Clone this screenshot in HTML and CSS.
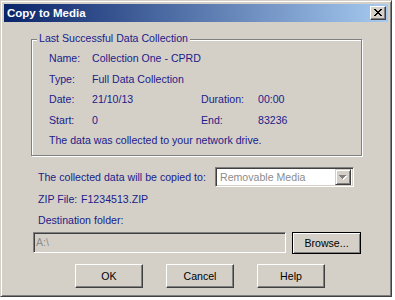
FILE: index.html
```html
<!DOCTYPE html>
<html>
<head>
<meta charset="utf-8">
<link rel="stylesheet" href="styles.css">
</head>
<body>
<div class="window">
  <div class="titlebar">
    <span class="title">Copy to Media</span>
    <div class="close">
      <svg width="8" height="7" viewBox="0 0 8 7" shape-rendering="crispEdges">
        <rect x="0" y="0" width="2" height="1"/><rect x="6" y="0" width="2" height="1"/>
        <rect x="1" y="1" width="2" height="1"/><rect x="5" y="1" width="2" height="1"/>
        <rect x="2" y="2" width="4" height="1"/>
        <rect x="3" y="3" width="2" height="1"/>
        <rect x="2" y="4" width="4" height="1"/>
        <rect x="1" y="5" width="2" height="1"/><rect x="5" y="5" width="2" height="1"/>
        <rect x="0" y="6" width="2" height="1"/><rect x="6" y="6" width="2" height="1"/>
      </svg>
    </div>
  </div>
  <div class="content">
    <div class="group">
      <div class="legend">Last Successful Data Collection</div>
      <div class="grid">
        <span>Name:</span><span class="span3">Collection One - CPRD</span>
        <span>Type:</span><span class="span3">Full Data Collection</span>
        <span>Date:</span><span>21/10/13</span><span>Duration:</span><span>00:00</span>
        <span>Start:</span><span>0</span><span>End:</span><span>83236</span>
        <span class="span4">The data was collected to your network drive.</span>
      </div>
    </div>
    <div class="copy-row">
      <span class="copy-label">The collected data will be copied to:</span>
      <div class="combo">
        <span class="combo-text">Removable Media</span>
        <div class="combo-btn">
          <svg width="8" height="5" viewBox="0 0 8 5" shape-rendering="crispEdges">
            <g fill="#ffffff"><rect x="1" y="1" width="7" height="1"/><rect x="2" y="2" width="5" height="1"/><rect x="3" y="3" width="3" height="1"/><rect x="4" y="4" width="1" height="1"/></g>
            <g fill="#808080"><rect x="0" y="0" width="7" height="1"/><rect x="1" y="1" width="5" height="1"/><rect x="2" y="2" width="3" height="1"/><rect x="3" y="3" width="1" height="1"/></g>
          </svg>
        </div>
      </div>
    </div>
    <div class="zip-row"><span class="zip-label">ZIP File:</span><span>F1234513.ZIP</span></div>
    <div class="dest-label">Destination folder:</div>
    <div class="dest-row">
      <div class="field">A:\</div>
      <div class="btn default">Browse...</div>
    </div>
    <div class="buttons">
      <div class="btn">OK</div>
      <div class="btn">Cancel</div>
      <div class="btn">Help</div>
    </div>
  </div>
</div>
</body>
</html>
```
FILE: styles.css
```css
html, body {
  margin: 0;
  padding: 0;
  background: #ffffff;
}
body {
  font-family: "Liberation Sans", Arial, sans-serif;
  font-size: 10.6px;
  color: #202088;
}
.window {
  width: 392px;
  height: 297px;
  box-sizing: border-box;
  background: #d4d0c8;
  border: 1px solid;
  border-color: #d4d0c8 #404040 #404040 #d4d0c8;
  box-shadow: inset 1px 1px #ffffff, inset -1px -1px #808080;
  padding: 3px;
  display: flex;
  flex-direction: column;
}
.titlebar {
  height: 18px;
  flex: none;
  background: linear-gradient(to right, #0a246a, #a6caf0);
  display: flex;
  align-items: center;
  justify-content: space-between;
  padding: 0 2px 0 3px;
}
.title {
  color: #ffffff;
  font-weight: bold;
  font-size: 11.5px;
  line-height: 18px;
}
.close {
  width: 16px;
  height: 14px;
  box-sizing: border-box;
  background: #d4d0c8;
  border: 1px solid;
  border-color: #ffffff #404040 #404040 #ffffff;
  box-shadow: inset -1px -1px #808080;
  display: flex;
  align-items: center;
  justify-content: center;
}
.close svg {
  display: block;
  fill: #000000;
  margin: 0 1px 1px 0;
}
.content {
  padding: 17px 0 0 27px;
}
.group {
  width: 331px;
  height: 117px;
  box-sizing: border-box;
  border: 1px solid #808080;
  box-shadow: inset 1px 1px #ffffff, 1px 1px #ffffff;
}
.legend {
  width: max-content;
  margin: -8px 0 0 5px;
  padding: 0 2px;
  background: #d4d0c8;
  line-height: 13px;
}
.grid {
  display: grid;
  grid-template-columns: 43px 109px 57px auto;
  grid-auto-rows: 20.5px;
  line-height: 20.5px;
  margin: 3px 0 0 17px;
  white-space: nowrap;
}
.span3 { grid-column: span 3; }
.span4 { grid-column: span 4; }
.copy-row {
  display: flex;
  align-items: center;
  margin: 11px 0 0 7px;
  height: 20px;
}
.copy-label {
  width: 177px;
  flex: none;
  white-space: nowrap;
}
.combo {
  width: 139px;
  height: 20px;
  box-sizing: border-box;
  border: 1px solid;
  border-color: #808080 #ffffff #ffffff #808080;
  box-shadow: inset 1px 1px #404040, inset -1px -1px #d4d0c8;
  background: #ffffff;
  padding: 2px;
  display: flex;
  align-items: center;
}
.combo-text {
  flex: 1;
  color: #8c8c8c;
  padding-left: 2px;
  line-height: 14px;
}
.combo-btn {
  width: 16px;
  height: 16px;
  box-sizing: border-box;
  background: #d4d0c8;
  border: 1px solid;
  border-color: #d4d0c8 #404040 #404040 #d4d0c8;
  box-shadow: inset 1px 1px #ffffff, inset -1px -1px #808080;
  display: flex;
  align-items: center;
  justify-content: center;
}
.combo-btn svg { display: block; }
.zip-row {
  margin: 6px 0 0 7px;
  line-height: 13px;
  display: flex;
}
.zip-label {
  width: 43px;
}
.dest-label {
  margin: 8px 0 0 7px;
  line-height: 13px;
}
.dest-row {
  display: flex;
  align-items: flex-start;
  margin: 5px 0 0 2px;
  gap: 6px;
}
.field {
  width: 253px;
  height: 21px;
  box-sizing: border-box;
  border: 1px solid;
  border-color: #808080 #ffffff #ffffff #808080;
  box-shadow: inset 1px 1px #404040, inset -1px -1px #d4d0c8;
  color: #8c8c8c;
  padding-left: 2px;
  line-height: 19px;
}
.btn {
  width: 68px;
  height: 24px;
  box-sizing: border-box;
  background: #d4d0c8;
  border: 1px solid;
  border-color: #ffffff #404040 #404040 #ffffff;
  box-shadow: inset -1px -1px #808080, inset 1px 1px #d4d0c8;
  color: #000000;
  display: flex;
  align-items: center;
  justify-content: center;
  line-height: 13px;
}
.btn.default {
  width: 69px;
  height: 22px;
  border-color: #000000;
  box-shadow: inset 1px 1px #ffffff, inset -1px -1px #808080;
}
.buttons {
  display: flex;
  gap: 23px;
  margin: 10px 0 0 44px;
}
```
